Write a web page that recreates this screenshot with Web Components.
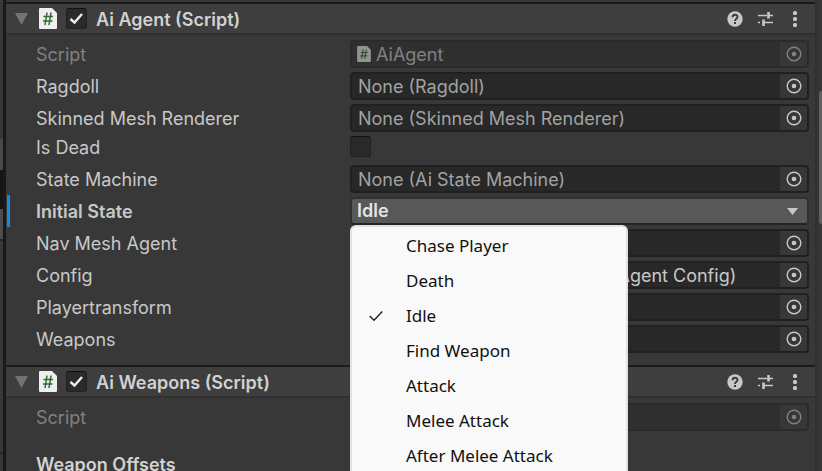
<!DOCTYPE html>
<html lang="en">
<head>
<meta charset="utf-8">
<title>Inspector</title>
<style>
html,body{margin:0;height:100%}
body{overflow:hidden;background:#383838;color:#c8c8c8;font:18px/24px Inter,"Liberation Sans",sans-serif}
</style>
</head>
<body>
<inspector-window>
  <inspector-component name="Ai Agent (Script)">
    <object-field label="Script" value="AiAgent" icon disabled></object-field>
    <object-field label="Ragdoll" value="None (Ragdoll)"></object-field>
    <object-field label="Skinned Mesh Renderer" value="None (Skinned Mesh Renderer)"></object-field>
    <toggle-field label="Is Dead"></toggle-field>
    <object-field label="State Machine" value="None (Ai State Machine)"></object-field>
    <enum-field label="Initial State" value="Idle" options="Chase Player|Death|Idle|Find Weapon|Attack|Melee Attack|After Melee Attack"></enum-field>
    <object-field label="Nav Mesh Agent"></object-field>
    <object-field label="Config" value="(Ai Agent Config)" assigned></object-field>
    <object-field label="Playertransform"></object-field>
    <object-field label="Weapons"></object-field>
  </inspector-component>
  <inspector-component name="Ai Weapons (Script)">
    <object-field label="Script" icon disabled></object-field>
    <group-heading>Weapon Offsets</group-heading>
  </inspector-component>
</inspector-window>

<script>
const BASE = `
  *{box-sizing:border-box}
  button,select,input{font:inherit;color:inherit;margin:0;padding:0;border:0;background:none;border-radius:0;appearance:none}
  svg{display:block;flex:none}
`;
const ROW = BASE + `
  :host{display:grid;grid-template-columns:314px minmax(0,1fr);align-items:center;padding:0 6px 0 30px}
  label{white-space:nowrap;padding-top:2px}
`;
const page = (w, h) => `<svg width="${w}" height="${h}" viewBox="0 0 18 21" aria-hidden="true">
  <path d="M1 0H13L18 5V20Q18 21 17 21H1Q0 21 0 20V1Q0 0 1 0Z" fill="#eeeeee"/>
  <path d="M8 4.500L6 17M12 4.500L10 17M4.500 8.500H14M4 13H13.500" fill="none" stroke="#2f6b30" stroke-width="1.500"/></svg>`;
const CHECK = `<svg width="21" height="21" viewBox="0 0 21 21" aria-hidden="true"><path d="M4.500 11L8.500 14.500L16 6" fill="none" stroke="#eeeeee" stroke-width="2.400"/></svg>`;
const BOX = `
  .box{display:inline-grid;width:21px;height:21px}
  .box>*{grid-area:1/1}
  .box input{width:21px;height:21px;background:#2a2a2a;border:1px solid #212121;border-top-color:#111;border-radius:3px}
  .box svg{pointer-events:none;visibility:hidden}
  .box input:checked + svg{visibility:visible}
`;

class Base extends HTMLElement {
  constructor(){ super(); this.attachShadow({mode:'open'}); }
  attr(n){ return this.getAttribute(n) || ''; }
  connectedCallback(){ this.shadowRoot.innerHTML = this.render(); }
}

customElements.define('inspector-window', class extends Base {
  render(){ return `<style>${BASE}
    :host{display:grid;grid-template-columns:3px 3px minmax(0,1fr) 7px;height:100vh;overflow:hidden}
    .dock{display:flex;flex-direction:column;background:#383838}
    .dock i{display:block}
    .gap{height:139px}.tab{height:31px;background:#484848}.dark{height:39px;background:#151515}
    .bar{height:30px;background:#4c4c4c}.rule{height:2px;background:#252525}.list{height:211px}
    .split{background:#191919}
    main{min-width:0;padding-top:2px}
    .scroll{background:#353535;border-left:2px solid #303030;padding:91px 0 0 2px}
    .thumb{height:133px;background:#5f5f5f;border-radius:4px 0 0 4px}
    </style>
    <div class="dock"><i class="gap"></i><i class="tab"></i><i class="dark"></i><i class="bar"></i><i class="rule"></i><i class="list"></i><i class="rule"></i></div>
    <div class="split"></div><main><slot></slot></main><div class="scroll"><div class="thumb"></div></div>`; }
});

customElements.define('inspector-component', class extends Base {
  render(){ const n = this.attr('name'); return `<style>${BASE}${BOX}
    :host{display:block;border-top:2px solid #1a1a1a}
    header{display:flex;align-items:center;height:31px;padding:0 12px 0 9px;background:#3e3e3e;border-bottom:2px solid #303030}
    h2{margin:0 0 0 9px;padding-top:2px;font-size:18px;line-height:24px;font-weight:600;flex:1;white-space:nowrap;color:#d2d2d2}
    .page{margin:0 9px 0 11px}
    .tools{display:flex;gap:14px}
    .tools button{display:block}
    .body{display:flex;flex-direction:column;gap:4px;padding:5px 0 12px}
    </style>
    <header>
      <button aria-label="Fold ${n}"><svg width="13" height="12" viewBox="0 0 13 12"><path d="M0 0H13L6.500 12Z" fill="#737373"/></svg></button>
      <span class="page">${page(18,21)}</span>
      <span class="box"><input type="checkbox" aria-label="Enable ${n}" checked>${CHECK}</span>
      <h2>${n}</h2>
      <div class="tools">
        <button aria-label="Help"><svg width="16" height="16" viewBox="0 0 16 16"><circle cx="8" cy="8" r="7.700" fill="#c8c8c8"/><path d="M5.500 6.300C5.500 3 10.500 3 10.500 6C10.500 7.800 8 7.800 8 10" fill="none" stroke="#3a3a3a" stroke-width="1.900"/><rect x="7" y="11" width="2" height="2" fill="#3a3a3a"/></svg></button>
        <button aria-label="Presets"><svg width="16" height="16" viewBox="0 0 16 16"><path d="M1 4.500H10M12 4.500H16M1 11.500H3M6 11.500H16" stroke="#c8c8c8" stroke-width="1.500"/><path d="M11.500 1V7.500M6.500 8.500V15" stroke="#c8c8c8" stroke-width="2.600"/></svg></button>
        <button aria-label="More options"><svg width="16" height="16" viewBox="0 0 16 16"><g fill="#c8c8c8"><rect x="6" y="0" width="4" height="4" rx="1.500"/><rect x="6" y="6" width="4" height="4" rx="1.500"/><rect x="6" y="12" width="4" height="4" rx="1.500"/></g></svg></button>
      </div>
    </header>
    <div class="body"><slot></slot></div>`; }
});

customElements.define('object-field', class extends Base {
  render(){ const d = this.hasAttribute('disabled') ? 'disabled' : ''; return `<style>${ROW}
    :host([disabled]) label{opacity:.5}
    :host([disabled]) .field{opacity:.5}
    .field{display:flex;height:28px;background:#282828;border:2px solid #202020;border-radius:4px;overflow:hidden}
    .value{display:flex;align-items:center;flex:1;min-width:0;gap:5px;padding:2px 0 0 6px;text-align:left;white-space:nowrap;color:#a2a2a2}
    .value svg{margin-bottom:2px}
    :host([icon]) .value{padding-left:5px;color:#c8c8c8}
    :host([assigned]) .value{padding-left:237px;color:#c8c8c8}
    .pick{display:flex;align-items:center;justify-content:center;width:27px;background:#373737}
    </style>
    <label for="v">${this.attr('label')}</label>
    <div class="field"><button id="v" class="value" ${d}>${this.hasAttribute('icon') ? page(14,16) : ''}<span>${this.attr('value')}</span></button>
    <button class="pick" aria-label="Select ${this.attr('label')}" ${d}><svg width="16" height="16" viewBox="0 0 16 16"><circle cx="8" cy="8" r="6.800" fill="none" stroke="#c8c8c8" stroke-width="1.400"/><circle cx="8" cy="8" r="2.300" fill="#c8c8c8"/></svg></button></div>`; }
});

customElements.define('toggle-field', class extends Base {
  render(){ return `<style>${ROW}${BOX}
    :host{grid-template-rows:21px;margin-bottom:4px}
    label{line-height:19px}
    </style><label for="v">${this.attr('label')}</label><span class="box"><input id="v" type="checkbox">${CHECK}</span>`; }
});

customElements.define('popup-menu', class extends Base {
  render(){ const v = this.attr('value'); return `<style>${BASE}
    :host{display:block;background:#f9f9f9;border:2px solid #e2e2e2;border-radius:6px;padding:1px 0 24px;color:#101010;font:17px/24px "Segoe UI","Noto Sans",sans-serif}
    button{display:grid;grid-template-columns:37px 1fr;align-items:center;width:100%;height:35px;padding-left:17px;text-align:left;white-space:nowrap}
    </style>${this.attr('options').split('|').map(o => `<button role="menuitemradio" aria-checked="${o===v}">${o===v ? `<svg width="14" height="12" viewBox="0 0 14 12"><path d="M.7 6L5 10.200L13.300 1.500" fill="none" stroke="#202020" stroke-width="1.400"/></svg>` : '<i></i>'}<span>${o}</span></button>`).join('')}`; }
});

customElements.define('enum-field', class extends Base {
  render(){ const v = this.attr('value'), os = this.attr('options'); return `<style>${ROW}
    :host{height:32px;margin:-2px 0 -2px 1px;padding-left:26px;border-left:3px solid #0f8edb;box-sizing:border-box;font-weight:600}
    .drop{display:grid;position:relative}
    .drop>select,.drop>.arrow{grid-area:1/1}
    select{width:100%;height:28px;background:#585858;border:2px solid #303030;border-bottom-color:#242424;border-radius:4px;padding:0 28px 0 5px;color:#e4e4e4}
    .arrow{align-self:center;justify-self:end;margin-right:11px;pointer-events:none}
    popup-menu{position:absolute;z-index:2;top:100%;left:0;width:278px}
    </style><label for="v">${this.attr('label')}</label>
    <div class="drop"><select id="v">${os.split('|').map(o => `<option ${o===v?'selected':''}>${o}</option>`).join('')}</select>
    <svg class="arrow" width="11" height="7" viewBox="0 0 11 7"><path d="M0 0H11L5.500 7Z" fill="#c8c8c8"/></svg>
    <popup-menu role="menu" value="${v}" options="${os}"></popup-menu></div>`; }
});

customElements.define('group-heading', class extends Base {
  render(){ return `<style>:host{display:block;padding:18px 6px 0 30px;font-weight:600;color:#d2d2d2}</style><slot></slot>`; }
});
</script>
</body>
</html>
